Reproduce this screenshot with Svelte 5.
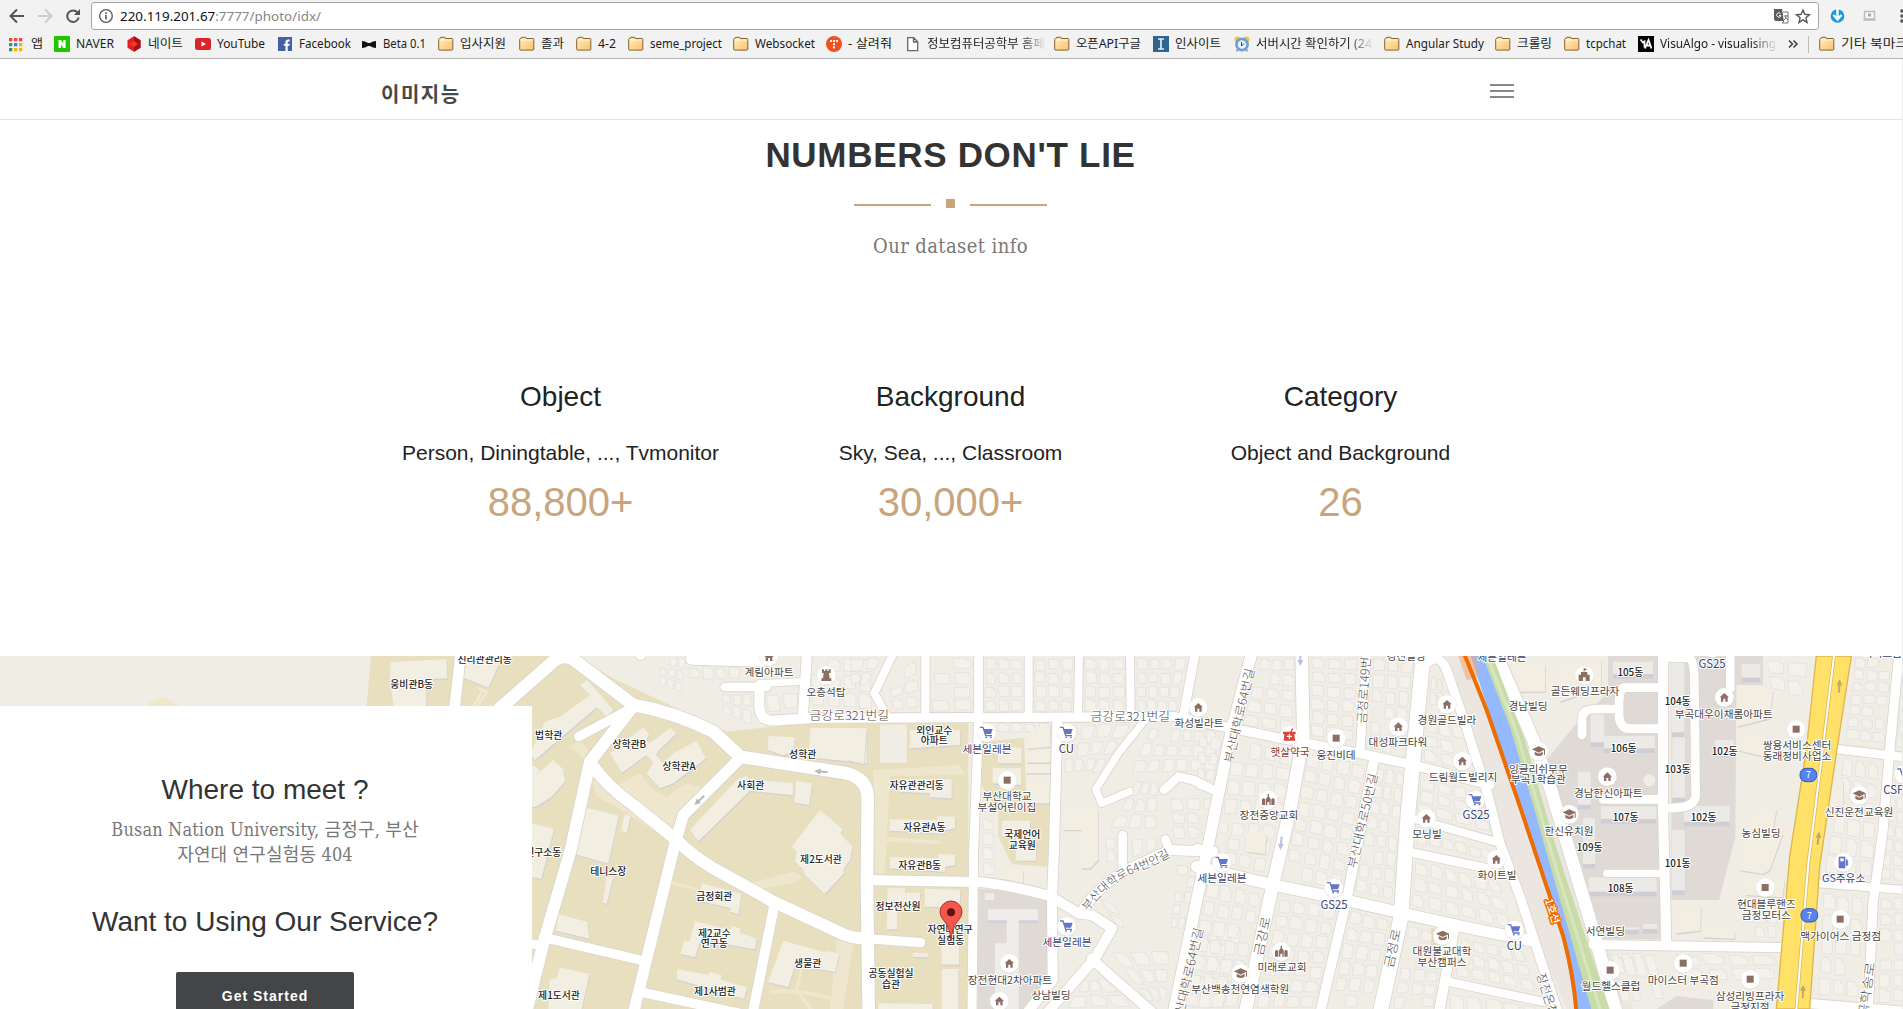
<script>
  // [kind, label, item width, label width, faded]
  const bookmarks = [
    ['apps', '앱', 45, 12], ['naver', 'NAVER', 72, 38], ['nate', '네이트', 69, 35],
    ['youtube', 'YouTube', 82, 48], ['facebook', 'Facebook', 84, 52], ['bow', 'Beta 0.1', 77, 43],
    ['folder', '입사지원', 81, 46], ['folder', '졸과', 57, 23], ['folder', '4-2', 52, 18],
    ['folder', 'seme_project', 105, 72], ['folder', 'Websocket', 93, 60], ['tistory', '- 살려줘', 79, 44],
    ['doc', '정보컴퓨터공학부 홈페', 149, 118, true], ['folder', '오픈API구글', 99, 65],
    ['inst', '인사이트', 81, 46], ['clock', '서버시간 확인하기 (24', 150, 116, true],
    ['folder', 'Angular Study', 111, 78], ['folder', '크롤링', 69, 35], ['folder', 'tcpchat', 74, 40],
    ['va', 'VisuAlgo - visualising', 150, 116, true]
  ];

  const stats = [
    ['Object', 'Person, Diningtable, ..., Tvmonitor', '88,800+'],
    ['Background', 'Sky, Sea, ..., Classroom', '30,000+'],
    ['Category', 'Object and Background', '26']
  ];

  // The map is split into four tiles; every tile holds its own local coordinates.
  const A = 1500, B = 2550, C = 3600, D = 4629;

  const roads = [
    [A, 38, 'M0,175 L165,30 Q195,10 225,32 L400,165 Q520,185 640,245 L720,320 Q750,325 860,342 L1040,370 Q1100,385 1103,440 L1101,700 L1106,1090'],
    [A, 32, 'M-118,10 L-137,180'],
    [A, 36, 'M400,168 L270,335 L212,600 L130,880 L78,1090'],
    [A, 28, 'M236,260 L400,172'],
    [A, 36, 'M270,335 Q310,400 400,465 L530,570 Q580,620 640,655 L820,755 L1035,855 Q1060,865 1110,866'],
    [A, 34, 'M720,325 L550,495 L525,580 L400,1090'],
    [A, 30, 'M822,770 L758,1090'], [A, 28, 'M130,862 L420,930'], [A, 28, 'M430,1028 L720,1090'], [A, 26, 'M80,880 L130,886'],
    [A, 26, 'M674,111 L800,111'], [A, 30, 'M778,105 V170 Q780,210 815,212 L930,205'], [A, 30, 'M921,10 L908,205'],
    [A, 20, 'M790,100 L910,94'], [A, 36, 'M575,26 L790,32'], [A, 30, 'M422,5 V15'],
    [B, 28, 'M-140,205 L975,200'], [B, 24, 'M130,10 L73,130 L115,205'], [B, 25, 'M226,10 V195'],
    [B, 27, 'M386,10 V200 L371,600 L366,1090'], [B, 24, 'M536,10 V200'], [B, 24, 'M687,10 L684,200'],
    [B, 24, 'M840,10 L842,200'], [B, 27, 'M1035,10 L1000,200'], [B, 22, 'M885,210 L805,310 L737,418 L755,460 L838,425'],
    [B, 26, 'M942,420 L985,380 L1030,390 L1090,420'], [B, 30, 'M622,215 L612,600 L606,740 L608,990 L530,1090'],
    [B, 30, 'M50,690 L400,697 Q500,710 600,738 L685,790 L725,795 L787,835 L735,925 L590,1090'],
    [B, 30, 'M725,925 L790,985 L910,1090'], [B, 28, 'M0,862 L212,878'],
    [B, 30, 'M690,792 Q750,700 840,655 L960,600 L1090,605'], [B, 26, 'M818,555 V650'], [B, 26, 'M946,568 L958,600'],
    [C, 34, 'M155,10 L90,260 L30,560 L-20,800 L-80,1090'], [C, 38, 'M305,10 L310,260 L270,480 L215,720 L135,1090'],
    [C, 28, 'M-50,205 L290,275 L480,310 L640,345 L870,405'], [C, 20, 'M0,407 L60,422'], [C, 26, 'M-10,595 L40,602'],
    [C, 34, 'M-10,650 L220,705 L400,742 L620,793 L780,828 L990,872'], [C, 26, 'M500,10 L480,310'],
    [C, 29, 'M522,330 L442,740 L360,1090'], [C, 44, 'M670,10 L625,480 L603,800 L540,1090'],
    [C, 28, 'M680,40 Q715,5 740,60 L800,235 L865,440 L900,580 L960,740 L1045,1000 L1075,1090'],
    [C, 24, 'M650,508 L890,576'], [C, 26, 'M625,605 L885,660'], [C, 30, 'M762,838 L737,980 L716,1090'], [C, 25, 'M740,994 L1032,1056'],
    [C, 38, 'M885,5 L1000,270 L1050,410 L1179,840 L1250,1090'],
    [D, 30, 'M360,10 V480 L370,880'], [D, 26, 'M370,22 L440,24 Q452,30 454,80 L458,440 Q450,470 410,472 L365,476'],
    [D, 26, 'M180,448 H350'], [D, 26, 'M350,113 H245 Q228,115 228,165 V200 Q232,235 260,236 H350'],
    [D, 26, 'M228,177 H160 Q116,178 117,205 V255'], [D, 22, 'M191,670 L360,670'], [D, 26, 'M562,10 V115'],
    [D, 28, 'M150,884 L720,893'], [D, 26, 'M880,297 L1090,322'], [D, 28, 'M1068,10 L1040,300 L1020,540 L990,760 L975,1090'],
    [D, 24, 'M825,700 L1090,720'], [D, 28, 'M795,1060 L1090,1085']
  ];

  // Hand-placed buildings inside the campus
  const buildings = [
    [A, '-328,36 -160,28 -158,85 -220,88 -222,170 -319,170 -330,90'], [A, '-95,22 5,25 -35,113 -112,82'],
    [A, '240,105 262,90 340,180 320,200 290,172 105,330 90,310 135,215 180,200 270,135'],
    [A, '90,340 120,362 105,378 160,330 190,358 195,395 155,440 108,470 90,470'],
    [A, '330,310 430,232 448,255 438,272 450,280 512,233 528,252 475,302 468,315 490,342 520,310 590,272 618,325 520,400 480,415 440,372 460,340 440,315 366,368'],
    [A, '260,474 356,497 325,641 225,612'], [A, '375,493 392,499 380,550 362,542'], [A, '320,680 340,682 320,762 308,758'],
    [A, '175,792 262,816 268,866 168,842'], [A, '90,520 162,536 124,687 90,680'], [A, '180,952 268,972 245,1077 145,1077 148,990 170,985'],
    [A, '570,540 715,385 740,378 745,388 880,400 878,436 750,422 595,574'], [A, '888,392 936,400 928,466 884,458'],
    [A, '960,480 1028,538 1022,552 1058,590 1050,630 1032,655 1030,672 974,732 915,675 910,660 885,635 890,605 875,590'],
    [A, '605,700 724,732 716,792 690,785 692,775 598,752'], [A, '585,814 692,840 696,828 722,836 720,848 770,866 765,898 690,885 605,860 585,922 542,912 552,872 568,876'],
    [A, '532,958 625,975 630,966 665,976 664,990 742,1012 732,1046 530,988'], [A, '850,872 980,908 984,902 1018,912 1005,966 885,945 865,1012 804,996'],
    [A, '932,233 1100,235 1100,340 925,322'], [A, '805,258 884,262 882,304 850,316 804,300'],
    [B, '180,240 330,240 330,285 180,295'],
    [B, '150,388 305,388 305,445 240,442 240,430 150,425'],
    [B, '120,508 262,510 262,498 315,500 315,535 285,540 285,552 200,545 118,542'], [B, '120,622 265,625 265,612 315,614 315,645 285,650 285,665 120,655'],
    [B, '113,715 165,715 165,728 210,728 210,768 142,770 142,838 110,838'], [B, '224,716 330,720 330,772 224,770'],
    [B, '275,880 328,880 328,944 275,944'], [B, '275,957 325,957 325,1077 275,1077'], [B, '85,1060 248,1062 248,1080 85,1080'], [B, '188,908 234,910 233,922 188,920'],
    [B, '-10,236 50,240 42,342 -10,330'], [B, '444,290 516,292 514,340 444,340'], [B, '428,355 514,355 514,405 428,400'], [B, '455,512 540,512 540,575 558,575 558,632 498,632 498,560 455,560'],
    [B, '525,252 600,222 602,290 530,296'], [B, '530,308 602,308 602,338 530,338'], [B, '528,350 602,350 602,370 528,370'], [B, '530,390 600,390 600,460 530,460'],
    [B, '638,480 710,472 745,478 745,630 720,655 695,655 695,540 640,540'], [B, '465,652 520,660 520,700 455,686'],
    [D, '50,28 175,28 175,125 125,130 50,155'], [D, '820,390 900,390 900,470 820,470'],
    [D, '582,105 690,122 680,205 582,230'], [D, '595,250 690,268 670,322 582,300'], [D, '655,475 700,480 690,540 720,550 680,660 660,672 588,660 600,570 625,510'],
    [D, '608,682 724,690 720,742 608,735'], [D, '398,792 425,790 430,770 474,768 472,842 398,850'], [D, '480,838 575,842 575,866 480,862'],
    [C, '915,45 1035,45 1035,125 930,125'], [C, '140,550 200,550 195,612 140,605']
  ];

  const towers = [
    [210, 35, 120, 50], [183, 258, 152, 50], [174, 470, 166, 50], [137, 682, 204, 56], [422, 468, 138, 60], [386, 30, 38, 230],
    [388, 262, 38, 194], [387, 540, 38, 194], [143, 180, 40, 110], [105, 365, 38, 112], [515, 270, 58, 50], [120, 505, 36, 150], [596, 42, 56, 54],
    [244, 832, 44, 20], [300, 822, 42, 28]
  ];

  // Residential blocks: offset, four corners, columns, rows
  const blocks = [
    [A, 480, 22, 560, 22, 545, 130, 475, 105, 3, 3], [A, 565, 48, 760, 48, 760, 92, 565, 92, 5, 1],
    [A, 665, 130, 755, 130, 755, 225, 665, 190, 3, 2], [A, 792, 125, 895, 125, 895, 185, 800, 190, 2, 1], [A, 930, 22, 1120, 22, 1120, 180, 930, 170, 4, 3],
    [B, 0, 20, 100, 20, 50, 110, 0, 110, 2, 2], [B, 105, 90, 205, 20, 205, 180, 125, 180, 2, 3],
    [B, 242, 22, 368, 22, 368, 188, 242, 188, 2, 4], [B, 402, 22, 520, 22, 520, 188, 402, 188, 3, 4],
    [B, 552, 22, 670, 22, 670, 188, 552, 188, 3, 4], [B, 700, 22, 826, 22, 826, 188, 700, 188, 3, 4],
    [B, 858, 22, 1010, 22, 980, 188, 858, 188, 4, 4], [B, 440, 217, 602, 217, 602, 248, 440, 248, 4, 1],
    [B, 640, 220, 850, 220, 750, 370, 640, 370, 4, 3], [B, 900, 230, 1100, 240, 1100, 370, 840, 370, 6, 3],
    [B, 860, 390, 925, 390, 925, 540, 770, 540, 3, 3], [B, 950, 440, 1110, 440, 1090, 570, 970, 570, 3, 3],
    [B, 392, 500, 435, 500, 440, 680, 392, 680, 1, 4], [B, 765, 560, 800, 560, 800, 640, 765, 640, 1, 2],
    [B, 840, 560, 930, 560, 920, 600, 840, 640, 2, 1], [B, 980, 640, 1060, 640, 1000, 840, 960, 840, 2, 5],
    [B, 700, 990, 760, 980, 860, 1077, 640, 1077, 3, 2], [B, 770, 900, 960, 900, 950, 1060, 900, 1060, 3, 3],
    [B, 1080, 820, 1180, 840, 1120, 1077, 1020, 1077, 3, 5], [B, 740, 740, 800, 760, 830, 840, 800, 830, 1, 2],
    [C, 180, 22, 285, 22, 285, 255, 120, 230, 3, 5], [C, 330, 22, 480, 22, 460, 280, 330, 260, 3, 6],
    [C, 518, 22, 645, 22, 610, 325, 505, 300, 3, 6], [C, 695, 80, 735, 80, 835, 375, 660, 335, 3, 6],
    [C, -10, 250, 70, 260, 40, 400, -10, 395, 2, 3], [C, 100, 265, 285, 300, 250, 500, 60, 500, 4, 4], [C, 50, 510, 235, 520, 195, 670, 20, 640, 4, 3],
    [C, 320, 305, 500, 345, 425, 720, 250, 685, 4, 8], [C, 530, 350, 615, 365, 580, 755, 460, 730, 3, 8],
    [C, 660, 380, 850, 425, 880, 550, 645, 490, 4, 3], [C, 645, 630, 900, 690, 940, 840, 625, 770, 6, 3],
    [C, 645, 540, 880, 600, 885, 635, 645, 580, 6, 1], [C, 20, 690, 190, 730, 110, 1077, -50, 1077, 4, 7],
    [C, 235, 740, 415, 770, 340, 1077, 165, 1077, 4, 7], [C, 450, 775, 575, 805, 510, 1077, 385, 1077, 3, 6],
    [C, 625, 825, 740, 850, 700, 1077, 575, 1077, 3, 6], [C, 780, 860, 970, 900, 1010, 1030, 760, 980, 5, 3], [C, 740, 1020, 1020, 1070, 1020, 1100, 740, 1090, 5, 1],
    [D, 385, 905, 700, 912, 700, 990, 430, 1000, 4, 2], [D, 200, 905, 330, 905, 370, 1060, 235, 1060, 4, 2], [D, 600, 780, 705, 780, 705, 870, 600, 870, 3, 2],
    [D, 660, 30, 800, 30, 780, 150, 680, 120, 2, 2], [D, 935, 22, 1048, 22, 1025, 280, 905, 270, 3, 7], [D, 900, 320, 1010, 340, 990, 690, 840, 670, 3, 6],
    [D, 840, 720, 965, 740, 950, 1050, 820, 1040, 3, 5], [D, 1040, 350, 1090, 350, 1080, 700, 1010, 690, 2, 8], [D, 1010, 740, 1090, 740, 1090, 1060, 1000, 1060, 2, 7],
    [D, 1075, 22, 1090, 22, 1080, 300, 1060, 290, 1, 7]
  ];

  let seed = 11;
  const rnd = () => ((seed = (seed * 16807) % 2147483647) / 2147483647);
  const houses = [];
  for (const [o, x0, y0, x1, y1, x2, y2, x3, y3, n, m] of blocks) {
    const at = (u, v) => [
      o + (1 - v) * ((1 - u) * x0 + u * x1) + v * ((1 - u) * x3 + u * x2),
      (1 - v) * ((1 - u) * y0 + u * y1) + v * ((1 - u) * y3 + u * y2)
    ].map((k) => k.toFixed(0)).join(',');
    for (let i = 0; i < n; i++) for (let j = 0; j < m; j++) {
      if (rnd() < 0.06) continue;
      const a = 0.05 + rnd() * 0.12, b = 0.83 + rnd() * 0.12, c = 0.05 + rnd() * 0.14, d = 0.8 + rnd() * 0.14, k = rnd() * 0.25;
      const pts = [[a, c], [b - k, c], [b - k, c + 0.15], [b, c + 0.15], [b, d], [a + 0.06, d]];
      houses.push(pts.map(([u, v]) => at((i + u) / n, (j + v) / m)).join(' '));
    }
  }

  // Campus names (dark, small)
  const campus = [
    [A, -46, 40, '진리관관리동'], [A, -265, 114, '웅비관B동'], [A, 146, 268, '법학관'], [A, 388, 295, '상학관B'], [A, 537, 361, '상학관A'],
    [A, 908, 325, '성학관'], [A, 752, 418, '사회관'], [A, 963, 638, '제2도서관'], [A, 130, 619, '연구소동'], [A, 325, 676, '테니스장'],
    [A, 643, 751, '금정회관'], [A, 643, 860, '제2교수'], [A, 643, 892, '연구동'], [A, 923, 952, '생물관'], [A, 177, 1048, '제1도서관'], [A, 645, 1035, '제1사범관'],
    [B, 253, 251, '외인교수'], [B, 253, 283, '아파트'], [B, 200, 417, '자유관관리동'], [B, 223, 544, '자유관A동'], [B, 209, 658, '자유관B동'],
    [B, 517, 565, '국제언어'], [B, 517, 597, '교육원'], [B, 144, 781, '정보전산원'], [B, 300, 850, '자연대연구'], [B, 302, 883, '실험동'],
    [B, 123, 981, '공동실험실'], [B, 123, 1014, '습관'],
    [D, 262, 77, '105동'], [D, 404, 164, '104동'], [D, 242, 305, '106동'], [D, 404, 370, '103동'], [D, 545, 316, '102동'], [D, 248, 514, '107동'],
    [D, 482, 514, '102동'], [D, 140, 602, '109동'], [D, 404, 650, '101동'], [D, 233, 725, '108동']
  ];
  // Points of interest
  const poi = [
    [A, 807, 78, '계림아파트'], [A, 978, 138, '오층석탑'], [B, 471, 450, '부산대학교'], [B, 471, 483, '부설어린이집'],
    [B, 1047, 231, '화성빌라트'], [B, 480, 1002, '장전현대2차아파트'], [B, 603, 1047, '상남빌딩'],
    [C, 408, 328, '웅진비데'], [C, 594, 289, '대성파크타워'], [C, 741, 223, '경원골드빌라'], [C, 789, 393, '드림월드빌리지'], [C, 618, 29, '경진빌딩'],
    [C, 207, 507, '장전중앙교회'], [C, 681, 564, '모닝빌'], [C, 891, 687, '화이트빌'], [C, 984, 181, '경남빌딩'], [C, 246, 963, '미래로교회'],
    [C, 121, 1029, '부산백송천연염색학원'], [C, 726, 915, '대원불교대학'], [C, 726, 947, '부산캠퍼스'],
    [D, 126, 135, '골든웨딩프라자'], [D, 542, 204, '부곡대우이채롬아파트'], [D, 762, 298, '쌍용서비스센터'], [D, 762, 330, '동래정비사업소'],
    [D, -14, 368, '잉글리쉬무무'], [D, -14, 400, '부곡1학습관'], [D, 196, 440, '경남한신아파트'], [D, 78, 556, '한신유치원'], [D, 654, 561, '농심빌딩'], [D, 948, 498, '신진운전교육원'],
    [D, 670, 775, '현대블루핸즈'], [D, 670, 808, '금정모터스'], [D, 893, 870, '맥가이어스 금정점'], [D, 187, 855, '서연빌딩'], [D, 421, 1002, '마이스터 부곡점'],
    [D, 204, 1021, '월드헬스클럽'], [D, 621, 1050, '삼성리빙프라자'], [D, 621, 1083, '금정지점']
  ];
  const shops = [
    [B, 411, 309, '세븐일레븐'], [B, 651, 888, '세븐일레븐'], [C, 66, 696, '세븐일레븐'], [C, 906, 34, '세븐일레븐'],
    [D, 902, 697, 'GS주유소'], [D, 1018, 22, '미니스톱']
  ];
  const latin = [[B, 649, 310, 'CU', 0], [C, 943, 899, 'CU', 1], [C, 402, 776, 'GS25', 1], [C, 828, 508, 'GS25', 1], [D, 507, 53, 'GS25', 1], [D, 1068, 433, 'CSP타', 1]];
  const streets = [
    [A, 1048, 210, 0, '금강로321번길', 239], [B, 841, 213, 0, '금강로321번길', 239], [C, 118, 197, -77, '부산대학로64번길', 290], [C, 493, 103, -86, '금정로149번길', 235],
    [C, 488, 512, -77, '부산대학로50번길', 290], [C, 187, 858, -78, '금강로', 118], [C, 578, 895, -78, '금정로', 118], [B, 1013, 980, -77, '부산대학로64번길', 300],
    [C, 1052, 1065, 72, '장전온천천로', 200], [D, 968, 1040, -82, '부곡학송로', 210]
  ];
  const pins = [
    [A, 807, 20, 'home'], [A, 979, 76, 'tower'], [B, 410, 248, 'cart'], [B, 650, 248, 'cart'], [B, 472, 391, 'box'], [B, 1045, 172, 'home'], [B, 650, 829, 'cart'],
    [B, 478, 940, 'home'], [B, 448, 1053, 'home'], [C, 268, 256, 'drug'], [C, 409, 265, 'box'], [C, 595, 230, 'home'], [C, 741, 163, 'home'], [C, 787, 333, 'home'],
    [C, 205, 450, 'church'], [C, 826, 450, 'cart'], [C, 679, 505, 'home'], [C, 889, 628, 'home'], [C, 66, 638, 'cart'], [C, 401, 714, 'cart'], [C, 943, 840, 'cart'],
    [C, 244, 905, 'church'], [C, 122, 970, 'school'], [C, 728, 857, 'school'], [C, 1016, 304, 'school'], [D, 124, 76, 'hall'], [D, 544, 142, 'home'], [D, 760, 238, 'box'],
    [D, 193, 380, 'home'], [D, 79, 493, 'school'], [D, 949, 436, 'school'], [D, 901, 637, 'fuel'], [D, 667, 713, 'box'], [D, 892, 808, 'box'], [D, 421, 940, 'box'],
    [D, 202, 961, 'box'], [D, 622, 988, 'box'], [D, 1083, 373, 'cart'], [D, 507, -6, 'cart']
  ];
  const arrows = [
    [A, 963, 365, 186, '#b9b6b6'], [A, 598, 451, 137, '#b9b6b6'], [C, 301, 28, 90, '#b9bfe0'], [C, 243, 580, 96, '#b9bfe0'],
    [D, 889, 108, -87, '#c3a766'], [D, 826, 565, -83, '#c3a766'], [D, 780, 1024, -88, '#c3a766']
  ];
</script>

{#snippet folder()}
  <svg width="16" height="16" viewBox="0 0 16 16">
    <defs><linearGradient id="fold" x1="0" y1="0" x2="1" y2="1"><stop offset="0" stop-color="#fff0c4" /><stop offset="1" stop-color="#fbc16b" /></linearGradient></defs>
    <path d="M.7 13.2V3.4q0-.9.9-.9h.6V2q0-.7.8-.7h3.5q.8 0 .8.8v.4h6.6q.9 0 .9.9v9.8q0 .9-.9.9H1.6q-.9 0-.9-.9z" fill="url(#fold)" stroke="#87622f" />
    <path d="M1.6 4h12.5" stroke="#fff5d8" />
  </svg>
{/snippet}

<div class="screen">
  <header class="chrome">
    <div class="toolbar">
      <svg class="nav-icons" width="91" height="30" viewBox="0 0 91 30" fill="none" stroke-width="2">
        <path d="M24 16H11M17 9.500l-6.500 6.500 6.500 6.500" stroke="#555" />
        <path d="M38 16h13M45 9.500l6.500 6.500-6.500 6.500" stroke="#ccc" />
        <path d="M77.500 12.500a5.800 5.800 0 1 0 1.200 5" stroke="#555" />
        <path d="M80 9v6h-6z" fill="#555" />
      </svg>
      <div class="address">
        <svg width="16" height="16" viewBox="0 0 16 16"><circle cx="8" cy="8" r="6.300" fill="none" stroke="#555" stroke-width="1.300" /><path d="M8 7v4.500M8 4.300v1.600" stroke="#555" stroke-width="1.600" /></svg>
        <svg class="url" width="205" height="20"><text y="15" textLength="201" lengthAdjust="spacingAndGlyphs">220.119.201.67<tspan fill="#858585">:7777/photo/idx/</tspan></text></svg>
        <svg class="tools" width="40" height="18" viewBox="0 0 40 18">
          <path d="M1 2h8l2 12H3q-2 0-2-2z" fill="#5c5c5c" /><path d="M10 5h5v11H9l2-2" fill="#fff" stroke="#777" /><path d="M11 9h4M13 8v1q0 3-2 4M12 10l3 3" stroke="#777" fill="none" />
          <path d="M7.500 6.500A2.200 2.200 0 1 0 8 8.500H6" fill="none" stroke="#fff" />
          <path d="M30 3l1.800 4.300 4.700.4-3.600 3.100 1.100 4.600-4-2.500-4 2.500 1.100-4.600-3.600-3.100 4.700-.4z" fill="none" stroke="#555" stroke-width="1.400" />
        </svg>
      </div>
      <svg class="ext" width="84" height="30" viewBox="0 0 84 30">
        <circle cx="18.500" cy="16" r="6.800" fill="#159bdc" /><path d="M18.500 8v10M14.500 15l4 4.500 4-4.500" stroke="#fff" stroke-width="2.400" fill="none" />
        <path d="M45.500 11.500h10v7.500h-10zM44.500 20h12" fill="#f6f6f6" stroke="#bbb" stroke-width="1.400" /><path d="M49 13.500h3v3h-3z" fill="#aaa" />
        <g fill="#555"><circle cx="83" cy="11" r="1.800" /><circle cx="83" cy="16" r="1.800" /><circle cx="83" cy="21" r="1.800" /></g>
      </svg>
    </div>
    <div class="bookmarks">
      {#each bookmarks as [kind, label, w, tw, fade]}
        <div class="bm" style:width="{w}px">
          {#if kind === 'folder'}
            {@render folder()}
          {:else}
            <svg width="16" height="16" viewBox="0 0 16 16">
              {#if kind === 'apps'}
                {#each ['#e8453c', '#e8453c', '#e8453c', '#2f9e55', '#3b7ded', '#f5b400', '#2f9e55', '#f5b400', '#f5b400'] as c, i}
                  <rect x={(i % 3) * 5} y={2 + Math.floor(i / 3) * 5} width="3.300" height="3.300" fill={c} />
                {/each}
              {:else if kind === 'naver'}
                <rect width="16" height="16" rx="1" fill="#1ec800" /><path d="M4.500 4H7l2.200 3.400V4h2.400v8H9.200L7 8.600V12H4.500z" fill="#fff" />
              {:else if kind === 'nate'}
                <path d="M8 .3l6.500 4v7.400l-6.500 4-6.500-4V4.300z" fill="#e31e24" /><path d="M8 .3l6.500 4v7.400l-6.500 4z" fill="#a90f13" /><path d="M4 8l4-3 4 3-4 3z" fill="#f3392c" />
              {:else if kind === 'youtube'}
                <rect y="2" width="16" height="12" rx="2.500" fill="#d9252a" /><path d="M6.500 5.500L11 8l-4.500 2.500z" fill="#fff" />
              {:else if kind === 'facebook'}
                <rect x="1" y="1" width="14" height="14" fill="#4560a5" /><path d="M8.500 15V9.800H6.800V7.700h1.700V6q0-2.600 2.700-2.600h1.500v2.100h-1.200q-.8 0-.8.9v1.300h2l-.3 2.100h-1.700V15z" fill="#fff" />
              {:else if kind === 'bow'}
                <path d="M1 5q3 0 6 2h2q3-2 6-2v7q-3 0-6-2H7q-3 2-6 2z" fill="#111" />
              {:else if kind === 'tistory'}
                <circle cx="8" cy="8" r="8" fill="#ec5320" /><g fill="#fff"><rect x="4" y="4" width="2" height="2" /><rect x="7" y="4" width="2" height="2" /><rect x="10" y="4" width="2" height="2" /><rect x="7" y="7.200" width="2" height="2" /><rect x="7" y="10.400" width="2" height="2" /></g>
              {:else if kind === 'doc'}
                <path d="M2.700 1.700h6l4 4v9H2.700zM8.500 1.700V6h4.200" fill="#fff" stroke="#666" stroke-width="1.300" />
              {:else if kind === 'inst'}
                <rect width="16" height="16" fill="#2f6690" /><path d="M5 3h6M5 13h6M8 3v10" stroke="#e4eef5" stroke-width="1.700" />
              {:else if kind === 'clock'}
                <path d="M4 13l-1.500 2.500M12 13l1.500 2.500" stroke="#999" stroke-width="1.500" /><circle cx="3.500" cy="3.500" r="3" fill="#f2c344" /><circle cx="12.500" cy="3.500" r="3" fill="#f2c344" /><circle cx="8" cy="8.500" r="5.600" fill="#e7f3fd" stroke="#6f9fd2" stroke-width="2.600" /><path d="M7.500 6v4l2.500-2.500" fill="none" stroke="#345" />
              {:else}
                <rect width="16" height="16" fill="#000" /><path d="M2.500 3.500l2.500 3 1.500-1v6M7 12.500l3.500-8.500 3 8.500M9 9.500h4" fill="none" stroke="#fff" stroke-width="1.800" />
              {/if}
            </svg>
          {/if}
          <svg class="lbl" class:fade width={fade ? tw + 5 : tw} height="20"><text y="14" textLength={tw} lengthAdjust="spacingAndGlyphs">{label}</text></svg>
        </div>
      {/each}
      <svg class="more" width="11" height="16" viewBox="0 0 11 16"><path d="M1 4.500L4.500 8 1 11.500M5.500 4.500L9 8l-3.500 3.500" fill="none" stroke="#444" stroke-width="1.600" /></svg>
      <span class="sep"></span>
      <div class="bm rest">{@render folder()}<svg class="lbl" width="70" height="20"><text y="14" textLength="67" lengthAdjust="spacingAndGlyphs">기타 북마크</text></svg></div>
    </div>
  </header>

  <main class="page">
    <nav><div class="inner"><span class="brand">이미지능</span><span class="burger"><i></i><i></i><i></i></span></div></nav>

    <section class="numbers">
      <h2>NUMBERS DON'T LIE</h2>
      <div class="divider"><i></i><b></b><i></i></div>
      <p class="sub">Our dataset info</p>
      <div class="stats">
        {#each stats as [title, text, num]}
          <div class="stat"><h3>{title}</h3><p>{text}</p><strong>{num}</strong></div>
        {/each}
      </div>
    </section>

    <section class="place">
      <svg class="map" width="1903" height="353" viewBox="0 18 5709 1059">
        <defs>
          <g id="home" fill="#8d6e63"><path d="M-14 0L0 -13L14 0H10V13H3V4H-3V13H-10V0Z" /></g>
          <g id="box" fill="#8d6e63"><rect x="-11" y="-11" width="21" height="21" /></g>
          <g id="cart"><path d="M-18 -16H-11L-3 9H14M-2 14h1M12 14h1" fill="none" stroke="#6576c8" stroke-width="4" stroke-linecap="square" /><path d="M-10 -11H18L13 4H-5Z" fill="#6576c8" /></g>
          <g id="church" fill="#8d6e63"><path d="M-19 -2l5-4 5 4V15H-19ZM9 -2l5-4 5 4V15H9ZM-7 -4L-2 -10V-18H2V-10L7 -4V15H3V6H-3V15H-7Z" /></g>
          <g id="school" fill="#8d6e63"><path d="M0 -15L20 -6L0 4L-20 -6ZM-12 1L0 7L12 1V10Q0 18 -12 10ZM16 -5H19V10H16Z" /></g>
          <g id="tower" fill="#8d6e63"><path d="M-13 -18H-7V-13H-3V-18H3V-13H7V-18H13V-7H8L10 9H15V17H-15V9H-10L-8 -7H-13Z" /></g>
          <g id="hall" fill="#8d6e63"><path d="M-2 -22L9 -18L0 -14V-10H9V-2H16V17H4V6H-4V17H-17V-2H-10V-10H-2Z" /></g>
          <g id="fuel"><path d="M-13 -16H5V17H-13ZM8 -9L13 -5V9H7" fill="#6576c8" stroke="#6576c8" stroke-width="2" /><path d="M-9 -12H1V-3H-9Z" fill="#fff" /></g>
          <g id="drug"><path d="M-19 -11H19V-4H15L17 16H-17L-15 -4H-19Z" fill="#dc4437" /><path d="M4 -10L10 -20" stroke="#dc4437" stroke-width="4" /><path d="M0 -5V11M-8 3H8" stroke="#fff" stroke-width="3.500" /></g>
        </defs>

        <rect y="18" width="5709" height="1059" fill="#f0ede5" />
        <path d="M445,155L490,141L545,170H450Z" fill="#efe8cd" />
        <path d="M1113,18H1720L1850,90L2180,245L2420,218L2905,210V1077H1100V170Z" fill="#e8dfbf" />
        <path d="M2640,224H2720V338H2640Z" fill="#f0ede5" />
        <path d="M2942,275L3072,264L3080,460H3150L3145,650L3035,643L2995,560V482L2940,400Z" fill="#e8dfbf" />
        <path d="M2936,716L3030,722L3143,755V990L3070,1077H2932Z" fill="#dfdad5" />
        <g fill="#efe6ce">
          <path d="M1710,290L1740,270L1765,300L1750,325ZM1770,370L1790,440L1850,470L1990,560L2030,530L2125,420L2060,400L2000,440L1960,420L1920,370L1880,390L1830,420Z" />
          <path d="M2620,360L2880,345L2895,375L2670,378L2655,670H2625ZM2660,560L2820,572V582L2660,575Z" />
          <path d="M2010,690L2090,715V722L2010,702ZM2250,700L2380,665L2405,680L2380,700L2250,722ZM2510,870L2560,880L2530,1077H2490Z" />
          <path d="M2310,1020Q2390,1010 2500,1040L2500,1052Q2390,1022 2310,1032ZM2400,950L2410,950L2395,1020L2440,1077H2425L2385,1020Z" />
        </g>
        <path d="M1435,115L1460,125L1430,175M1420,170L1448,120M1432,150L1446,155" fill="none" stroke="#f1e9d3" stroke-width="7" />
        <g fill="#dfdad5">
          <path d="M4824,18H4980V868H4810L4690,570L4640,430V330L4745,200L4824,130Z" />
          <path d="M5014,18H5289V105H5209L5206,560L5157,750H5014Z" />
          <path d="M4970,1077L5030,1038L5140,1050V1077Z" />
        </g>
        <path d="M4345,18H4480L4660,500L4900,1077H4700L4500,600Z" fill="#ebe7e0" />
        <path d="M4293,835H4360V885H4293Z" fill="#e8dab4" />

        <g class="house">{#each houses as p}<polygon points={p} />{/each}</g>
        {#each buildings as [o, p]}
          <g transform="translate({o} 0)"><polygon class="shade" points={p} /><polygon class="bld" points={p} /></g>
        {/each}
        {#each towers as [x, y, w, h]}
          <rect x={D + x} {y} width={w} height={h} fill="#eceae6" /><rect x={D + x} y={y + h - 13} width={w} height="14" fill="#cfcdd6" />
        {/each}
        <path d="M2964,778H3114V815H3056V1077H2985V880H3020V815H2964Z" fill="#efede9" />
        <path d="M2962,811H3020V818H2962ZM3056,811H3114V818H3056Z" fill="#cfd0dc" />
        <circle cx="4948" cy="391" r="18" fill="#efede9" />
        <rect x="2954" y="730" width="28" height="20" fill="#efede9" />

        {#each roads as [o, w, d]}<path {d} transform="translate({o} 0)" class="road" stroke="#dad5cd" stroke-width={w + 5} />{/each}
        {#each roads as [o, w, d]}<path {d} transform="translate({o} 0)" class="road" stroke="#fff" stroke-width={w} />{/each}

        <path d="M4412,18H4455L4533,230L4612,480L4648,610L4776,1077H4726L4690,860L4640,720L4560,480L4475,210Z" fill="#94b9ff" />
        <path d="M4448,18H4478L4575,270L4635,480L4690,660L4829,1077H4774L4640,610L4604,480L4530,230Z" fill="#c8dca8" />
        <path d="M4461,18L4551,250L4618,480L4664,640L4800,1077" fill="none" stroke="#d8e6c0" stroke-width="9" />

        <path d="M5449,18H5554L5509,310L5459,650L5429,1077H5329L5369,620L5419,300Z" fill="#ffe168" stroke="#dfb64e" stroke-width="4" />
        <path d="M5502,18L5464,330L5425,640L5389,1077" fill="none" stroke="#e0ba5a" stroke-width="11" />
        <path d="M5502,18L5464,330L5425,640L5389,1077" fill="none" stroke="#fff" stroke-width="6" />
        <path d="M4375,18H4425L4440,75L4400,92Z" fill="#f4a675" opacity=".55" />
        <path d="M4392,10L4460,180L4560,470L4640,710L4690,860Q4722,980 4729,1085" fill="none" stroke="#ef6c00" stroke-width="12" />

        {#each arrows as [o, x, y, r, c]}
          <path transform="translate({o + x} {y}) rotate({r})" d="M-20,-3H2V-9L20,0L2,9V3H-20Z" fill={c} />
        {/each}

        <g class="street">
          {#each streets as [o, x, y, r, t, len]}
            <text transform="translate({o + x} {y}) rotate({r})" textLength={len} lengthAdjust="spacingAndGlyphs" y={r ? 13 : 0}>{t}</text>
          {/each}
          <path id="curve" d="M3264,785Q3330,690 3430,658Q3490,635 3535,603" fill="none" stroke="none" />
          <text class="bend"><textPath href="#curve" startOffset="0">부산대학로64번안길</textPath></text>
        </g>

        {#each pins as [o, x, y, k]}
          <g transform="translate({o + x} {y})"><circle r="29" cy="1" fill="#d8d4ce" opacity=".7" /><circle r="28" fill="#fff" /><use href="#{k}" /></g>
        {/each}

        <g class="campus">{#each campus as [o, x, y, t]}<text x={o + x} {y}>{t}</text>{/each}</g>
        <g class="poi">{#each poi as [o, x, y, t]}<text x={o + x} {y}>{t}</text>{/each}</g>
        <g class="poi shop">{#each shops as [o, x, y, t]}<text x={o + x} {y}>{t}</text>{/each}</g>
        <g class="poi latin">{#each latin as [o, x, y, t, s]}<text x={o + x} {y} class:blue={s}>{t}</text>{/each}</g>
        <text class="pharm" x="3870" y="318">햇살약국</text>
        <text class="line" transform="translate(4657 783) rotate(72)" y="11">1호선</text>
        {#each [[5425, 375], [5428, 796]] as [x, y]}
          <rect x={x - 25} y={y - 20} width="50" height="40" rx="18" fill="#5683ef" stroke="#3357b8" stroke-width="3" /><text class="route" {x} y={y + 10}>7</text>
        {/each}

        <path d="M2853,872Q2850,833 2834,815Q2820,800 2820,786A33,33 0 0 1 2886,786Q2886,800 2872,815Q2856,833 2853,872Z" fill="#f2584e" stroke="#b5322b" stroke-width="3" />
        <circle cx="2853" cy="787" r="12" fill="#64110f" />
      </svg>

      <aside class="card">
        <h3>Where to meet ?</h3>
        <p>Busan Nation University, 금정구, 부산<br />자연대 연구실험동 404</p>
        <h3 class="second">Want to Using Our Service?</h3>
        <button>Get Started</button>
      </aside>
    </section>
  </main>
</div>

<style>
  :global(body) { margin: 0; overflow: hidden; }
  .screen { width: 1903px; height: 1009px; overflow: hidden; background: #fff; font-family: "Liberation Sans", Arial, sans-serif; color: #222; }
  .chrome { height: 59px; box-sizing: border-box; background: #f2f2f2; border-bottom: 1px solid #b3b3b3; overflow: hidden; }
  .toolbar { display: flex; height: 30px; }
  .toolbar > svg { flex: none; }
  .address { flex: 1; height: 28px; box-sizing: border-box; margin-top: 2px; border: 1px solid #a8a8a8; border-radius: 3px; background: #fff; display: flex; align-items: center; padding: 0 5px 0 6px; }
  .url { margin-left: 6px; font: 13px "Noto Sans", sans-serif; fill: #111; overflow: visible; }
  .tools { margin-left: auto; }
  .bookmarks { display: flex; align-items: center; height: 28px; padding-left: 9px; }
  .bm { display: flex; align-items: center; gap: 6px; flex: none; height: 20px; }
  .bm svg { flex: none; }
  .lbl { font: 12px "Noto Sans", "Noto Sans CJK KR", sans-serif; fill: #1c1c1c; overflow: visible; }
  .fade { mask-image: linear-gradient(90deg, #000 76%, transparent 97%); }
  .more { flex: none; }
  .sep { flex: none; width: 1px; height: 17px; margin: 0 10px 0 9px; background: #bbb; }
  .rest { width: 90px; }

  .page { border-right: 1px solid #e9e9e9; box-sizing: border-box; }
  nav { height: 60px; border-bottom: 1px solid #e5e5e5; }
  .inner { width: 1140px; margin: 0 auto; padding-right: 7px; height: 60px; display: flex; justify-content: space-between; box-sizing: border-box; }
  .brand { font: bold 20px/27px "Noto Sans CJK KR", sans-serif; letter-spacing: 1.500px; color: #484848; padding-top: 21px; }
  .burger { width: 24px; display: flex; flex-direction: column; gap: 4px; padding-top: 25px; }
  .burger i { height: 2px; background: #888; }

  .numbers { height: 536px; box-sizing: border-box; padding: 15px 1px 0 0; text-align: center; }
  h2, h3, p { margin: 0; font-weight: normal; }
  h2 { font-size: 35px; line-height: 40px; font-weight: bold; letter-spacing: .700px; color: #333; }
  .divider { display: flex; justify-content: center; align-items: center; gap: 15px; height: 9px; margin-top: 24px; }
  .divider i { width: 77px; height: 2px; margin-top: 3px; background: #c7a57d; }
  .divider b { width: 9px; height: 9px; background: #c7a57d; }
  .sub { margin-top: 23px; font: 20px/30px "DejaVu Serif Condensed", "DejaVu Serif", serif; letter-spacing: .400px; color: #777; }
  .stats { width: 1170px; margin: 119px auto 0; display: grid; grid-template-columns: repeat(3, 1fr); }
  .stat h3 { font-size: 28px; line-height: 34px; }
  .stat p { margin-top: 24px; font-size: 21px; line-height: 30px; white-space: nowrap; }
  .stat strong { display: block; margin-top: 9px; font-weight: normal; font-size: 40px; line-height: 50px; color: #c7a57d; }

  .place { display: grid; height: 353px; overflow: hidden; }
  .map, .card { grid-area: 1 / 1; }
  .map { display: block; }
  .card { z-index: 1; width: 532px; height: 303px; margin-top: 50px; box-sizing: border-box; padding: 67px 2px 0 0; background: #fff; text-align: center; overflow: hidden; }
  .card h3 { font-size: 28px; line-height: 34px; color: #333; }
  .card p { margin-top: 11px; height: 50px; font: 18px/24.500px "DejaVu Serif Condensed", "DejaVu Serif", "Noto Sans CJK KR", serif; letter-spacing: .150px; color: #777; }
  .card .second { margin-top: 37px; }
  button { display: block; width: 178px; height: 52px; margin: 33px auto 0; border: 0; border-radius: 2px; background: #444546; color: #fff; font: bold 14px/46px "Liberation Sans", Arial, sans-serif; letter-spacing: 1px; padding: 0 0 4px; }

  .house polygon { fill: #f4f1ea; stroke: #e0dee0; stroke-width: 2; }
  .shade { fill: #d3d1d4; transform: translate(2px, 4px); }
  .bld { fill: #f2eee2; }
  .road { fill: none; stroke-linecap: round; stroke-linejoin: round; }
  .map text { font-family: "Noto Sans CJK KR", sans-serif; text-anchor: middle; paint-order: stroke; stroke: #fff; stroke-width: 6px; stroke-linejoin: round; }
  .campus text { font-size: 29.500px; font-weight: 500; fill: #222; }
  .poi text { font-size: 32px; fill: #484444; }
  .map .shop text, .map .latin .blue { fill: #3a4174; }
  .map .latin text { font-size: 34px; }
  .street text { font-size: 37px; font-weight: 300; fill: #504b4b; }
  .map .street .bend { text-anchor: start; font-size: 36px; }
  .map .pharm { font-size: 32px; fill: #8b3833; }
  .map .line { font-size: 32px; fill: #fff; stroke: #ef6c00; stroke-width: 9px; font-weight: 500; }
  .map .route { font-size: 28px; fill: #fff; stroke: none; }
</style>
